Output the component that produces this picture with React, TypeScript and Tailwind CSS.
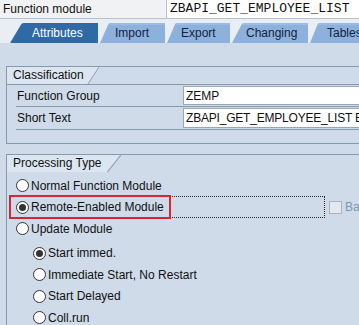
const font = { fontFamily: '"Liberation Sans", Tahoma, sans-serif' };

const Tab = ({ label, active, w, pl }: { label: string; active?: boolean; w: string; pl: string }) => {
  return (
    <div className={`relative h-[20px] ${w} shrink-0`}>
      <svg className="absolute inset-0 h-full w-full" preserveAspectRatio="none" viewBox="0 0 100 20">
        <path d="M0 20 L13 1 Q14 0 16 0 L100 0 L100 20 Z" fill={active ? "#2f6aa6" : "#8db0dc"} />
        {!active && <path d="M14 1 L100 1" stroke="#b5cdec" strokeWidth="1" />}
      </svg>
      <span
        className={`relative flex h-full items-center whitespace-nowrap ${pl} text-[12px] ${
          active ? "text-white" : "text-[#14233a]"
        }`}
      >
        {label}
      </span>
    </div>
  );
};

const GroupHead = ({ label, w }: { label: string; w: string }) => (
  <div className={`relative h-[17px] ${w}`}>
    <svg className="absolute inset-0 h-full w-full" preserveAspectRatio="none" viewBox="0 0 100 17">
      <path d="M0 0 L100 0 L88 17 L0 17 Z" fill="#dbe6f1" />
      <path d="M100 0 L88 17" stroke="#8a9db2" strokeWidth="1" />
    </svg>
    <span className="relative block pl-[6px] text-[12px] leading-[17px] text-[#111]">{label}</span>
  </div>
);

const Radio = ({ on }: { on?: boolean }) => (
  <span className="flex h-[13px] w-[13px] shrink-0 items-center justify-center rounded-full border border-[#333] bg-white">
    {on && <span className="h-[7px] w-[7px] rounded-full bg-[#333]" />}
  </span>
);

const RadioRow = ({ label, on, indent }: { label: string; on?: boolean; indent?: boolean }) => (
  <div className={`flex h-[21.5px] items-center gap-[2px] ${indent ? "pl-[26px]" : "pl-[9px]"}`}>
    <Radio on={on} />
    <span className="text-[12px] text-[#111]">{label}</span>
  </div>
);

export default function App() {
  return (
    <div className="h-[325px] w-[359px] overflow-hidden bg-[#cfdbe9]" style={font}>
      <div className="flex h-[19px] border-b border-[#b7c0cb] bg-[#f1f2f4]">
        <div className="flex w-[167px] items-center border-r border-[#b7c0cb] pl-[3px] text-[12px] text-[#111]">
          Function module
        </div>
        <div
          className="flex flex-1 items-center bg-white pl-[3px] text-[13px] text-[#111]"
          style={{ fontFamily: '"Liberation Mono", monospace' }}
        >
          ZBAPI_GET_EMPLOYEE_LIST
        </div>
      </div>
      <div className="flex items-end gap-[2px] overflow-hidden bg-[#e9eef4] pl-[10px] pt-[4px]">
        <Tab label="Attributes" active w="w-[88px]" pl="pl-[22px]" />
        <Tab label="Import" w="w-[65px]" pl="pl-[15px]" />
        <Tab label="Export" w="w-[63px]" pl="pl-[14px]" />
        <Tab label="Changing" w="w-[76px]" pl="pl-[14px]" />
        <Tab label="Tables" w="w-[60px]" pl="pl-[17px]" />
      </div>

      <div className="ml-[6px] mt-[23px] border border-r-0 border-[#8699ad] pb-[13px]">
        <div className="border-b border-[#8699ad]">
          <GroupHead label="Classification" w="w-[92px]" />
        </div>
        <div className="pl-[9px]">
          <div className="flex h-[22px] items-center border-b border-[#8699ad]">
            <span className="w-[167px] pl-[1px] text-[12px] text-[#111]">Function Group</span>
            <span className="flex h-[19px] flex-1 items-center border border-r-0 border-[#9aa6b4] bg-white pl-[2px] text-[12px] text-[#111]">
              ZEMP
            </span>
          </div>
          <div className="flex h-[23px] items-center border-b border-[#8699ad]">
            <span className="w-[167px] pl-[1px] text-[12px] text-[#111]">Short Text</span>
            <span className="flex h-[20px] flex-1 items-center overflow-hidden whitespace-nowrap border border-r-0 border-[#9aa6b4] bg-white pl-[2px] text-[12px] tracking-[-0.2px] text-[#111]">
              ZBAPI_GET_EMPLOYEE_LIST BAPI
            </span>
          </div>
        </div>
      </div>

      <div className="ml-[6px] mt-[10px] border border-b-0 border-r-0 border-[#8699ad] pb-4">
        <GroupHead label="Processing Type" w="w-[114px]" />
        <div className="pt-[3px]">
          <RadioRow label="Normal Function Module" />
          <div className="relative flex h-[21.5px] items-center pl-[9px]">
            <div className="absolute bottom-[0px] left-[3px] top-[-1px] w-[315px] border border-dotted border-[#2a2a2a]" />
            <div className="absolute bottom-[-1px] left-[2px] top-[-2px] w-[162px] border-2 border-[#d62631]" />
            <div className="relative flex items-center gap-[2px]">
              <Radio on />
              <span className="text-[12px] text-[#111]">Remote-Enabled Module</span>
            </div>
            <div className="absolute left-[322px] flex items-center gap-[3px]">
              <span className="h-[13px] w-[13px] border border-[#a9b3bf] bg-[#e4e9ef]" />
              <span className="text-[12px] text-[#8197b3]">Basis</span>
            </div>
          </div>
          <RadioRow label="Update Module" />
          <div className="h-[3px]" />
          <RadioRow label="Start immed." on indent />
          <RadioRow label="Immediate Start, No Restart" indent />
          <RadioRow label="Start Delayed" indent />
          <RadioRow label="Coll.run" indent />
        </div>
      </div>
    </div>
  );
}
